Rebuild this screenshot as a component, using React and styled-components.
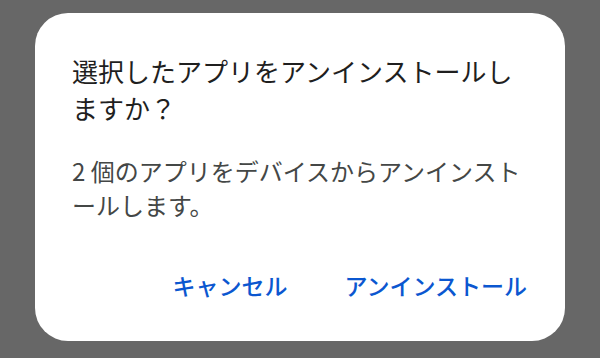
import React from 'react';
import styled, { createGlobalStyle } from 'styled-components';

const GlobalStyle = createGlobalStyle`
  html, body {
    margin: 0;
    padding: 0;
    background: #676767;
  }
  body {
    font-family: "Noto Sans CJK JP", "Noto Sans", sans-serif;
  }
`;

const Scrim = styled.div`
  width: 600px;
  height: 358px;
  background: #676767;
  padding: 13px 35px 0;
  box-sizing: border-box;
  overflow: hidden;
`;

const DialogBlock = styled.div`
  width: 530px;
  height: 328px;
  box-sizing: border-box;
  background: #ffffff;
  border-radius: 33px;
  padding: 39px 37px 0 37px;
  display: flex;
  flex-direction: column;
`;

const Title = styled.div`
  font-size: 26px;
  line-height: 37px;
  color: #1f1f1f;
  font-weight: 400;
  line-break: loose;
`;

const Message = styled.div`
  margin-top: 28px;
  font-size: 24px;
  line-height: 34px;
  color: #444746;
  line-break: loose;
`;

const Actions = styled.div`
  margin-top: 39px;
  margin-right: -11px;
  display: flex;
  justify-content: flex-end;
  gap: 33px;
`;

const TextButton = styled.button`
  height: 48px;
  padding: 0 12px;
  border: none;
  background: transparent;
  font-family: inherit;
  font-size: 23px;
  font-weight: 500;
  color: #0b57d0;
  cursor: pointer;
`;

const UninstallDialog = () => {
  const count = 2;
  return (
    <DialogBlock role="dialog">
      <Title>選択したアプリをアンインストールしますか？</Title>
      <Message>{`${count} 個のアプリをデバイスからアンインストールします。`}</Message>
      <Actions>
        <TextButton>キャンセル</TextButton>
        <TextButton>アンインストール</TextButton>
      </Actions>
    </DialogBlock>
  );
};

const App = () => (
  <>
    <GlobalStyle />
    <Scrim>
      <UninstallDialog />
    </Scrim>
  </>
);

export default App;
